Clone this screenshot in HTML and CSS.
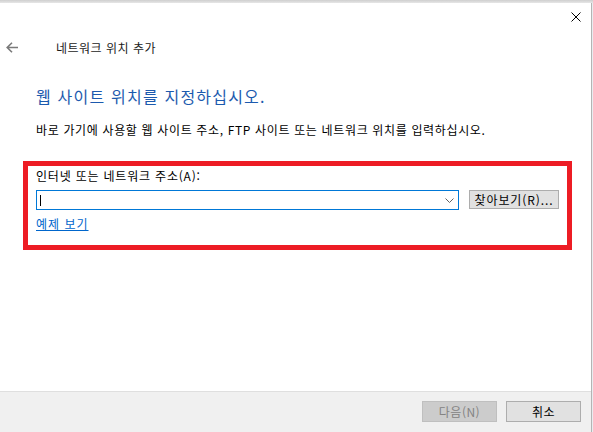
FILE: index.html
```html
<!DOCTYPE html>
<html lang="ko">
<head>
<meta charset="utf-8">
<title>네트워크 위치 추가</title>
<link rel="stylesheet" href="styles.css">
</head>
<body>
<div class="screen">
  <div class="top-strip"></div>
  <div class="stage">
    <div class="window">
      <div class="titlebar">
        <svg class="close" width="10" height="10" viewBox="0 0 10 10"><path d="M0.5 0.5L9.5 9.5M9.5 0.5L0.5 9.5" stroke="#000" stroke-width="1" fill="none"/></svg>
      </div>
      <div class="nav">
        <svg class="back" width="12" height="11" viewBox="0 0 12 11"><path d="M1 5.5H12M6 0.7L1.2 5.5L6 10.3" stroke="#7a7a7a" stroke-width="1.6" fill="none"/></svg>
        <span class="nav-title">네트워크 위치 추가</span>
      </div>
      <div class="content">
        <h1 class="heading">웹 사이트 위치를 지정하십시오.</h1>
        <p class="desc">바로 가기에 사용할 웹 사이트 주소, FTP 사이트 또는 네트워크 위치를 입력하십시오.</p>
        <div class="highlight">
          <div class="label">인터넷 또는 네트워크 주소(A):</div>
          <div class="field-row">
            <div class="combo">
              <span class="caret"></span>
              <svg class="chev" width="9" height="5" viewBox="0 0 9 5"><path d="M0.5 0.5L4.5 4.5L8.5 0.5" stroke="#606060" stroke-width="1" fill="none"/></svg>
            </div>
            <button class="btn browse" type="button">찾아보기(R)...</button>
          </div>
          <a class="link" href="#">예제 보기</a>
        </div>
      </div>
      <div class="footer">
        <button class="btn disabled" type="button">다음(N)</button>
        <button class="btn" type="button">취소</button>
      </div>
    </div>
    <div class="edge"></div>
  </div>
</div>
</body>
</html>
```
FILE: styles.css
```css
html, body {
  margin: 0;
  padding: 0;
}
body {
  width: 593px;
  height: 432px;
  overflow: hidden;
  background: #ffffff;
  font-family: "Noto Sans CJK KR", "Noto Sans", sans-serif;
  font-size: 12px;
  color: #000;
}
.screen {
  display: flex;
  flex-direction: column;
  width: 593px;
  height: 432px;
}
.top-strip {
  height: 3px;
  background: linear-gradient(#cfcfcf, #e6e6e6);
}
.stage {
  flex: 1;
  display: flex;
}
.window {
  width: 591px;
  border-right: 1px solid #b4b4b4;
  background: #fff;
  display: flex;
  flex-direction: column;
}
.edge {
  flex: 1;
  background: #e9ecef;
}
.titlebar {
  height: 29px;
  display: flex;
  justify-content: flex-end;
  align-items: flex-start;
  padding-top: 9px;
  padding-right: 10px;
  box-sizing: border-box;
}
.close {
  display: block;
}
.nav {
  height: 30px;
  display: flex;
  align-items: center;
  padding-left: 6px;
}
.back {
  display: block;
}
.nav-title {
  margin-left: 38px;
  font-size: 12px;
  line-height: 17px;
  letter-spacing: 0.5px;
  color: #1a1a1a;
}
.content {
  padding-left: 23px;
}
.heading {
  margin: 23px 0 0 13px;
  font-size: 16px;
  font-weight: normal;
  line-height: 22px;
  letter-spacing: 1.2px;
  color: #1c5aae;
}
.desc {
  margin: 14px 0 0 13px;
  font-size: 12px;
  line-height: 18px;
  letter-spacing: 0.65px;
}
.highlight {
  margin-top: 22px;
  width: 549px;
  box-sizing: border-box;
  border: 5px solid #ed1c24;
  padding: 1px 8px 13px 8px;
}
.label {
  line-height: 17px;
  letter-spacing: 0.8px;
}
.field-row {
  margin-top: 6px;
  display: flex;
  align-items: flex-start;
  gap: 10px;
}
.combo {
  width: 423px;
  height: 20px;
  box-sizing: border-box;
  border: 1px solid #0078d7;
  display: flex;
  align-items: center;
  justify-content: space-between;
  padding: 0 4px 0 3px;
}
.caret {
  display: block;
  width: 0;
  height: 11px;
  border-left: 1px solid #000;
}
.chev {
  display: block;
}
.btn {
  font-family: "Noto Sans CJK KR", "Noto Sans", sans-serif;
  font-size: 12px;
  line-height: 17px;
  letter-spacing: 0.5px;
  width: 75px;
  height: 21px;
  padding: 0;
  margin: 0;
  background: #e1e1e1;
  border: 1px solid #adadad;
  color: #000;
}
.browse {
  width: 90px;
  height: 19px;
  letter-spacing: 0.9px;
}
.disabled {
  background: #cccccc;
  border-color: #bfbfbf;
  color: #838383;
}
.link {
  display: inline-block;
  margin-top: 5px;
  line-height: 17px;
  letter-spacing: 1px;
  color: #0066cc;
  text-decoration: underline;
}
.footer {
  margin-top: auto;
  height: 41px;
  box-sizing: border-box;
  border-top: 1px solid #dfdfdf;
  background: #f0f0f0;
  display: flex;
  justify-content: flex-end;
  gap: 9px;
  padding: 9px 10px 0 0;
}
```
